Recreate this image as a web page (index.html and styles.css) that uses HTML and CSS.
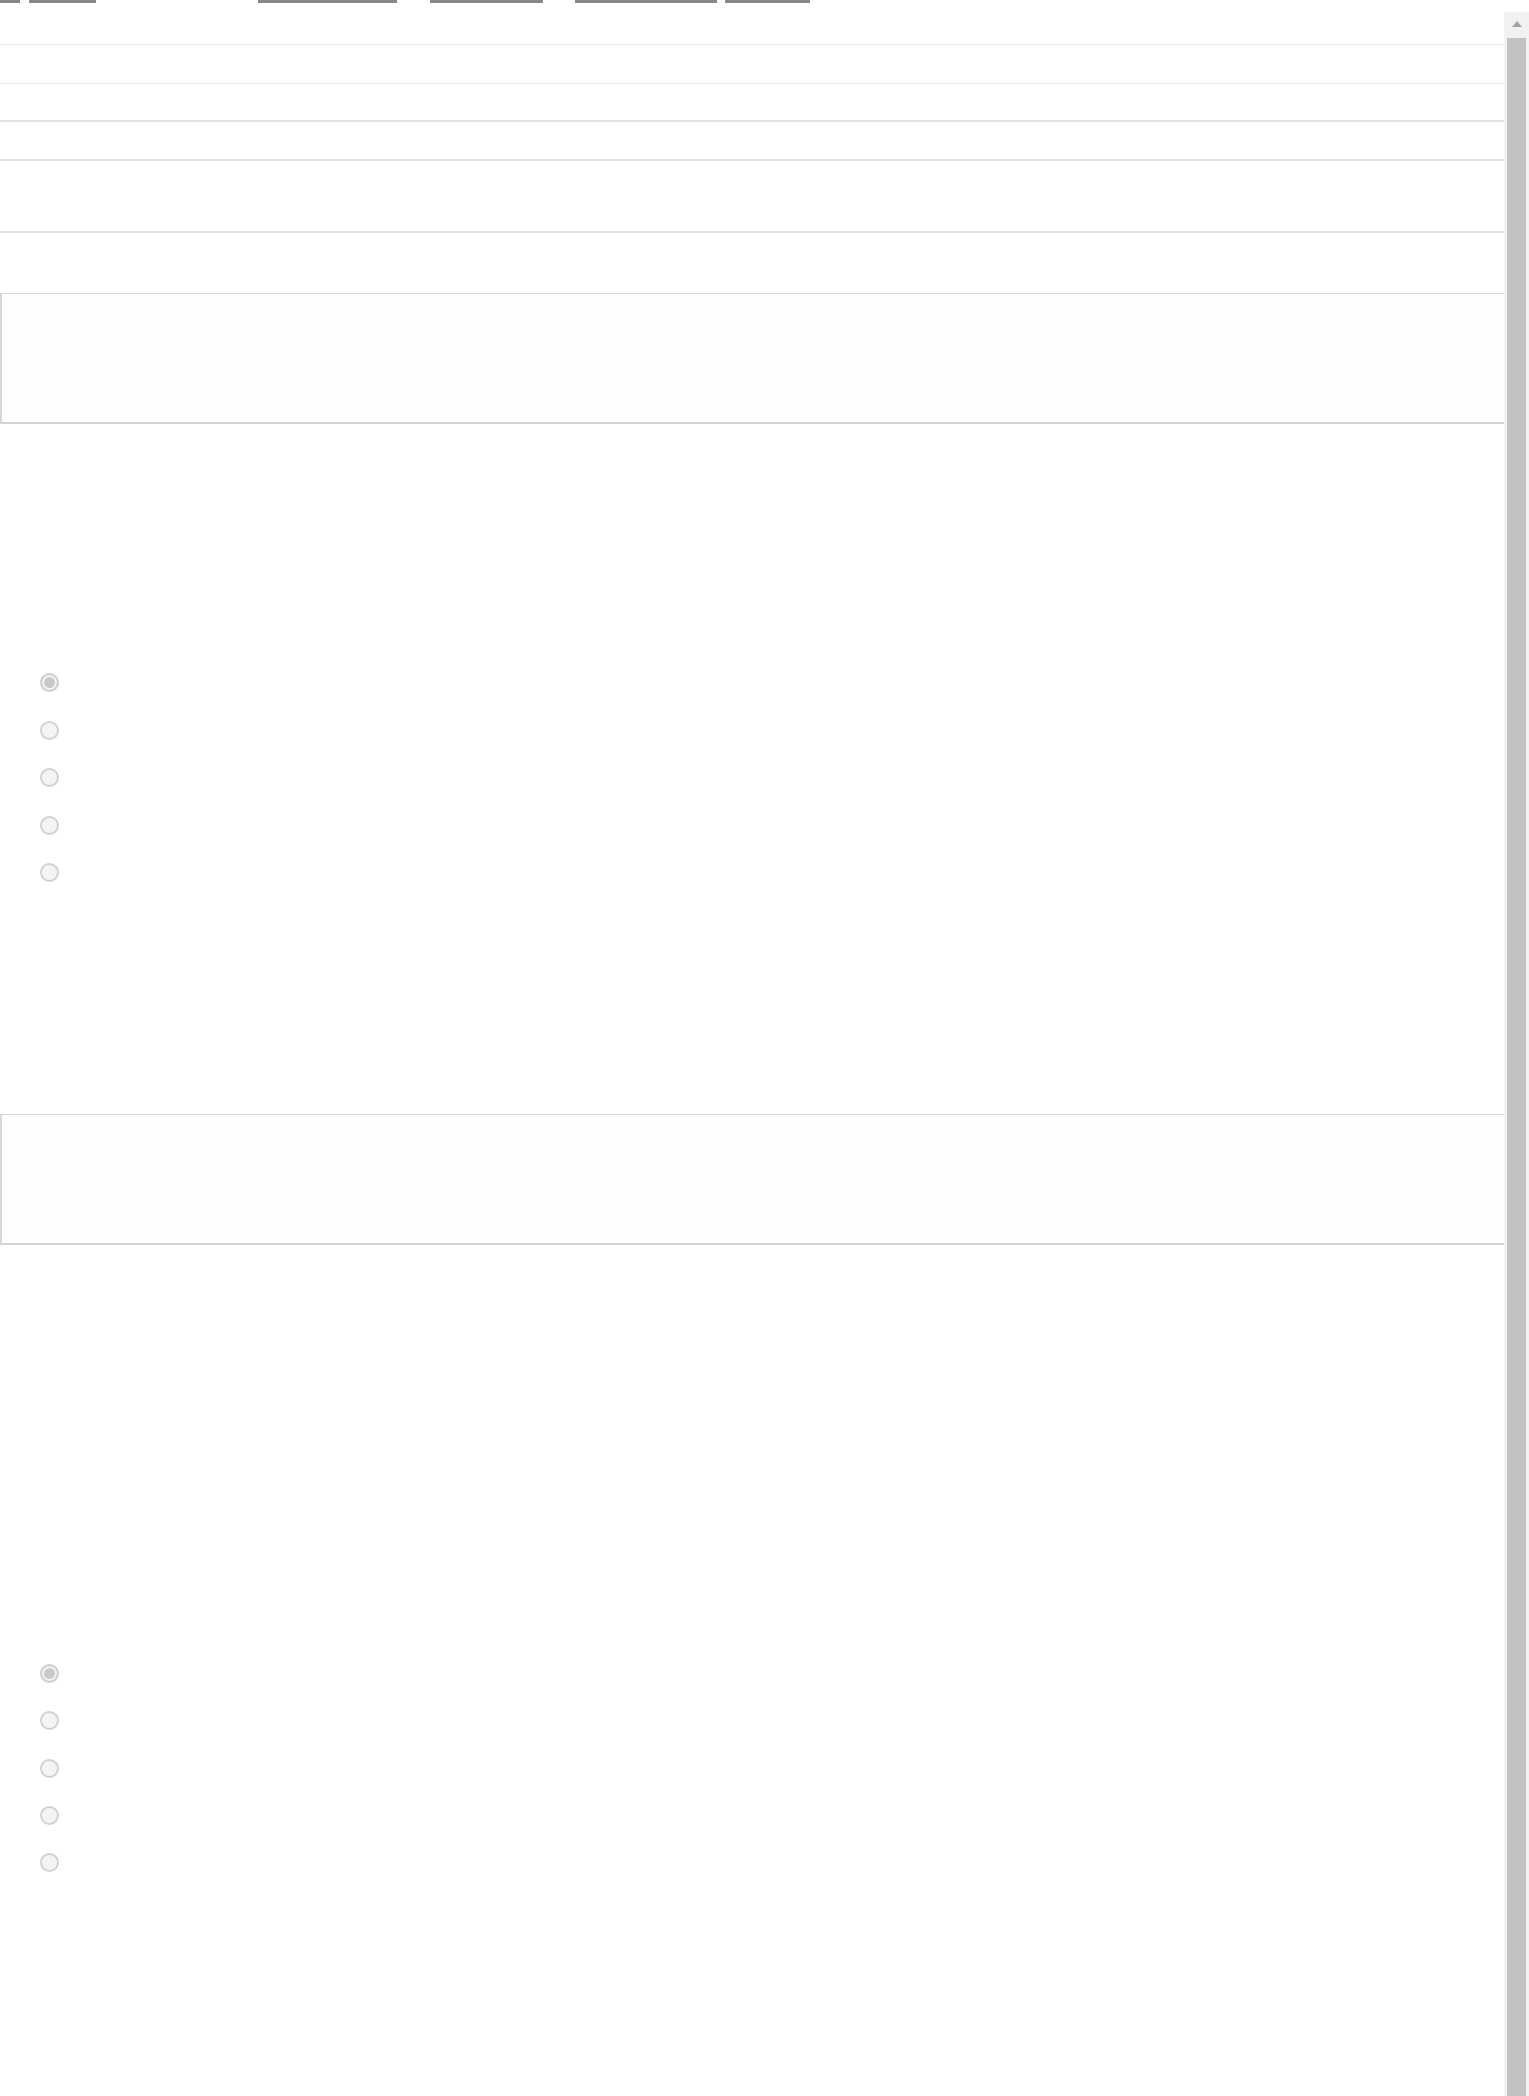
FILE: index.html
```html
<!DOCTYPE html>
<html lang="en">
<head>
    <meta charset="UTF-8">
    <meta name="viewport" content="width=device-width, initial-scale=1.0">
    <title>Poll</title>
    <link rel="stylesheet" href="styles.css">
</head>
<body>
    <nav class="top-links">
        <a class="link link-a" href="#"></a>
        <a class="link link-b" href="#"></a>
        <a class="link link-c" href="#"></a>
        <a class="link link-d" href="#"></a>
        <a class="link link-e" href="#"></a>
        <a class="link link-f" href="#"></a>
    </nav>

    <main class="pane">
        <div class="row row-thin row-1"></div>
        <div class="row row-thin row-2"></div>
        <div class="row row-thick row-3"></div>
        <div class="row row-thick row-4"></div>
        <div class="row row-thick row-5"></div>

        <section class="question question-1">
            <div class="answer-box"></div>
            <div class="choices">
                <input type="radio" name="q1" class="choice" checked disabled>
                <input type="radio" name="q1" class="choice" disabled>
                <input type="radio" name="q1" class="choice" disabled>
                <input type="radio" name="q1" class="choice" disabled>
                <input type="radio" name="q1" class="choice" disabled>
            </div>
        </section>

        <section class="question question-2">
            <div class="answer-box"></div>
            <div class="choices">
                <input type="radio" name="q2" class="choice" checked disabled>
                <input type="radio" name="q2" class="choice" disabled>
                <input type="radio" name="q2" class="choice" disabled>
                <input type="radio" name="q2" class="choice" disabled>
                <input type="radio" name="q2" class="choice" disabled>
            </div>
        </section>
    </main>

    <!-- scrollbar of the inner frame, drawn over the content -->
    <div class="scrollbar">
        <div class="scroll-up"></div>
        <div class="scroll-thumb"></div>
    </div>
</body>
</html>
```

FILE: styles.css
```css
html, body {
    margin: 0;
    height: 100%;
    overflow: hidden;
}

body {
    font-family: 'Roboto', sans-serif;
    background-color: #ffffff;
    color: #333;
}

/* Link underlines peeking in at the very top */
.top-links {
    height: 12px;
    display: flex;
    align-items: flex-start;
}

.link {
    display: block;
    height: 3px;
    background-color: #888888;
}

.link-a { width: 20px; }
.link-b { width: 67px; margin-left: 9px; }
.link-c { width: 139px; margin-left: 162px; }
.link-d { width: 113px; margin-left: 33px; }
.link-e { width: 142px; margin-left: 32px; }
.link-f { width: 85px; margin-left: 8px; }

.pane {
    display: flex;
    flex-direction: column;
}

.row-thin {
    border-bottom: 1px solid #e6e6e6;
}

.row-thick {
    border-bottom: 2px solid #dfe1e5;
}

.row-1 { height: 32px; }
.row-2 { height: 38px; }
.row-3 { height: 36px; }
.row-4 { height: 37px; }
.row-5 { height: 70px; }

.answer-box {
    height: 127px;
    margin-right: 25px;
    background-color: #fefefe;
    border-top: 1px solid #d6d8dd;
    border-left: 2px solid #d6d8dd;
    border-bottom: 2px solid #d0d3d8;
}

.question-1 { margin-top: 60px; }
.question-1 .answer-box { height: 128px; }
.question-1 .choices { margin-top: 249px; gap: 28.5px; }

.question-2 { margin-top: 232px; }
.question-2 .answer-box { height: 128px; }
.question-2 .choices { margin-top: 419px; gap: 28.3px; }

.choices {
    display: flex;
    flex-direction: column;
    align-items: flex-start;
    padding-left: 40px;
}

.choice {
    appearance: none;
    -webkit-appearance: none;
    margin: 0;
    width: 19px;
    height: 19px;
    box-sizing: border-box;
    border-radius: 50%;
    border: 2px solid #d2d2d2;
    background-color: #f4f4f4;
}

.choice:checked {
    border-color: #d0d0d0;
    background-color: #c9c9c9;
    box-shadow: inset 0 0 0 2px #f6f6f6;
}

/* Scrollbar */
.scrollbar {
    position: fixed;
    top: 12px;
    right: 0;
    bottom: 0;
    width: 25px;
    background-color: #f1f1f1;
}

.scroll-up {
    width: 0;
    height: 0;
    margin: 9px auto 0;
    border-left: 5px solid transparent;
    border-right: 5px solid transparent;
    border-bottom: 6px solid #a3a3a3;
}

.scroll-thumb {
    position: absolute;
    top: 26px;
    left: 3px;
    right: 3px;
    bottom: -20px;
    background-color: #c1c1c1;
}
```
